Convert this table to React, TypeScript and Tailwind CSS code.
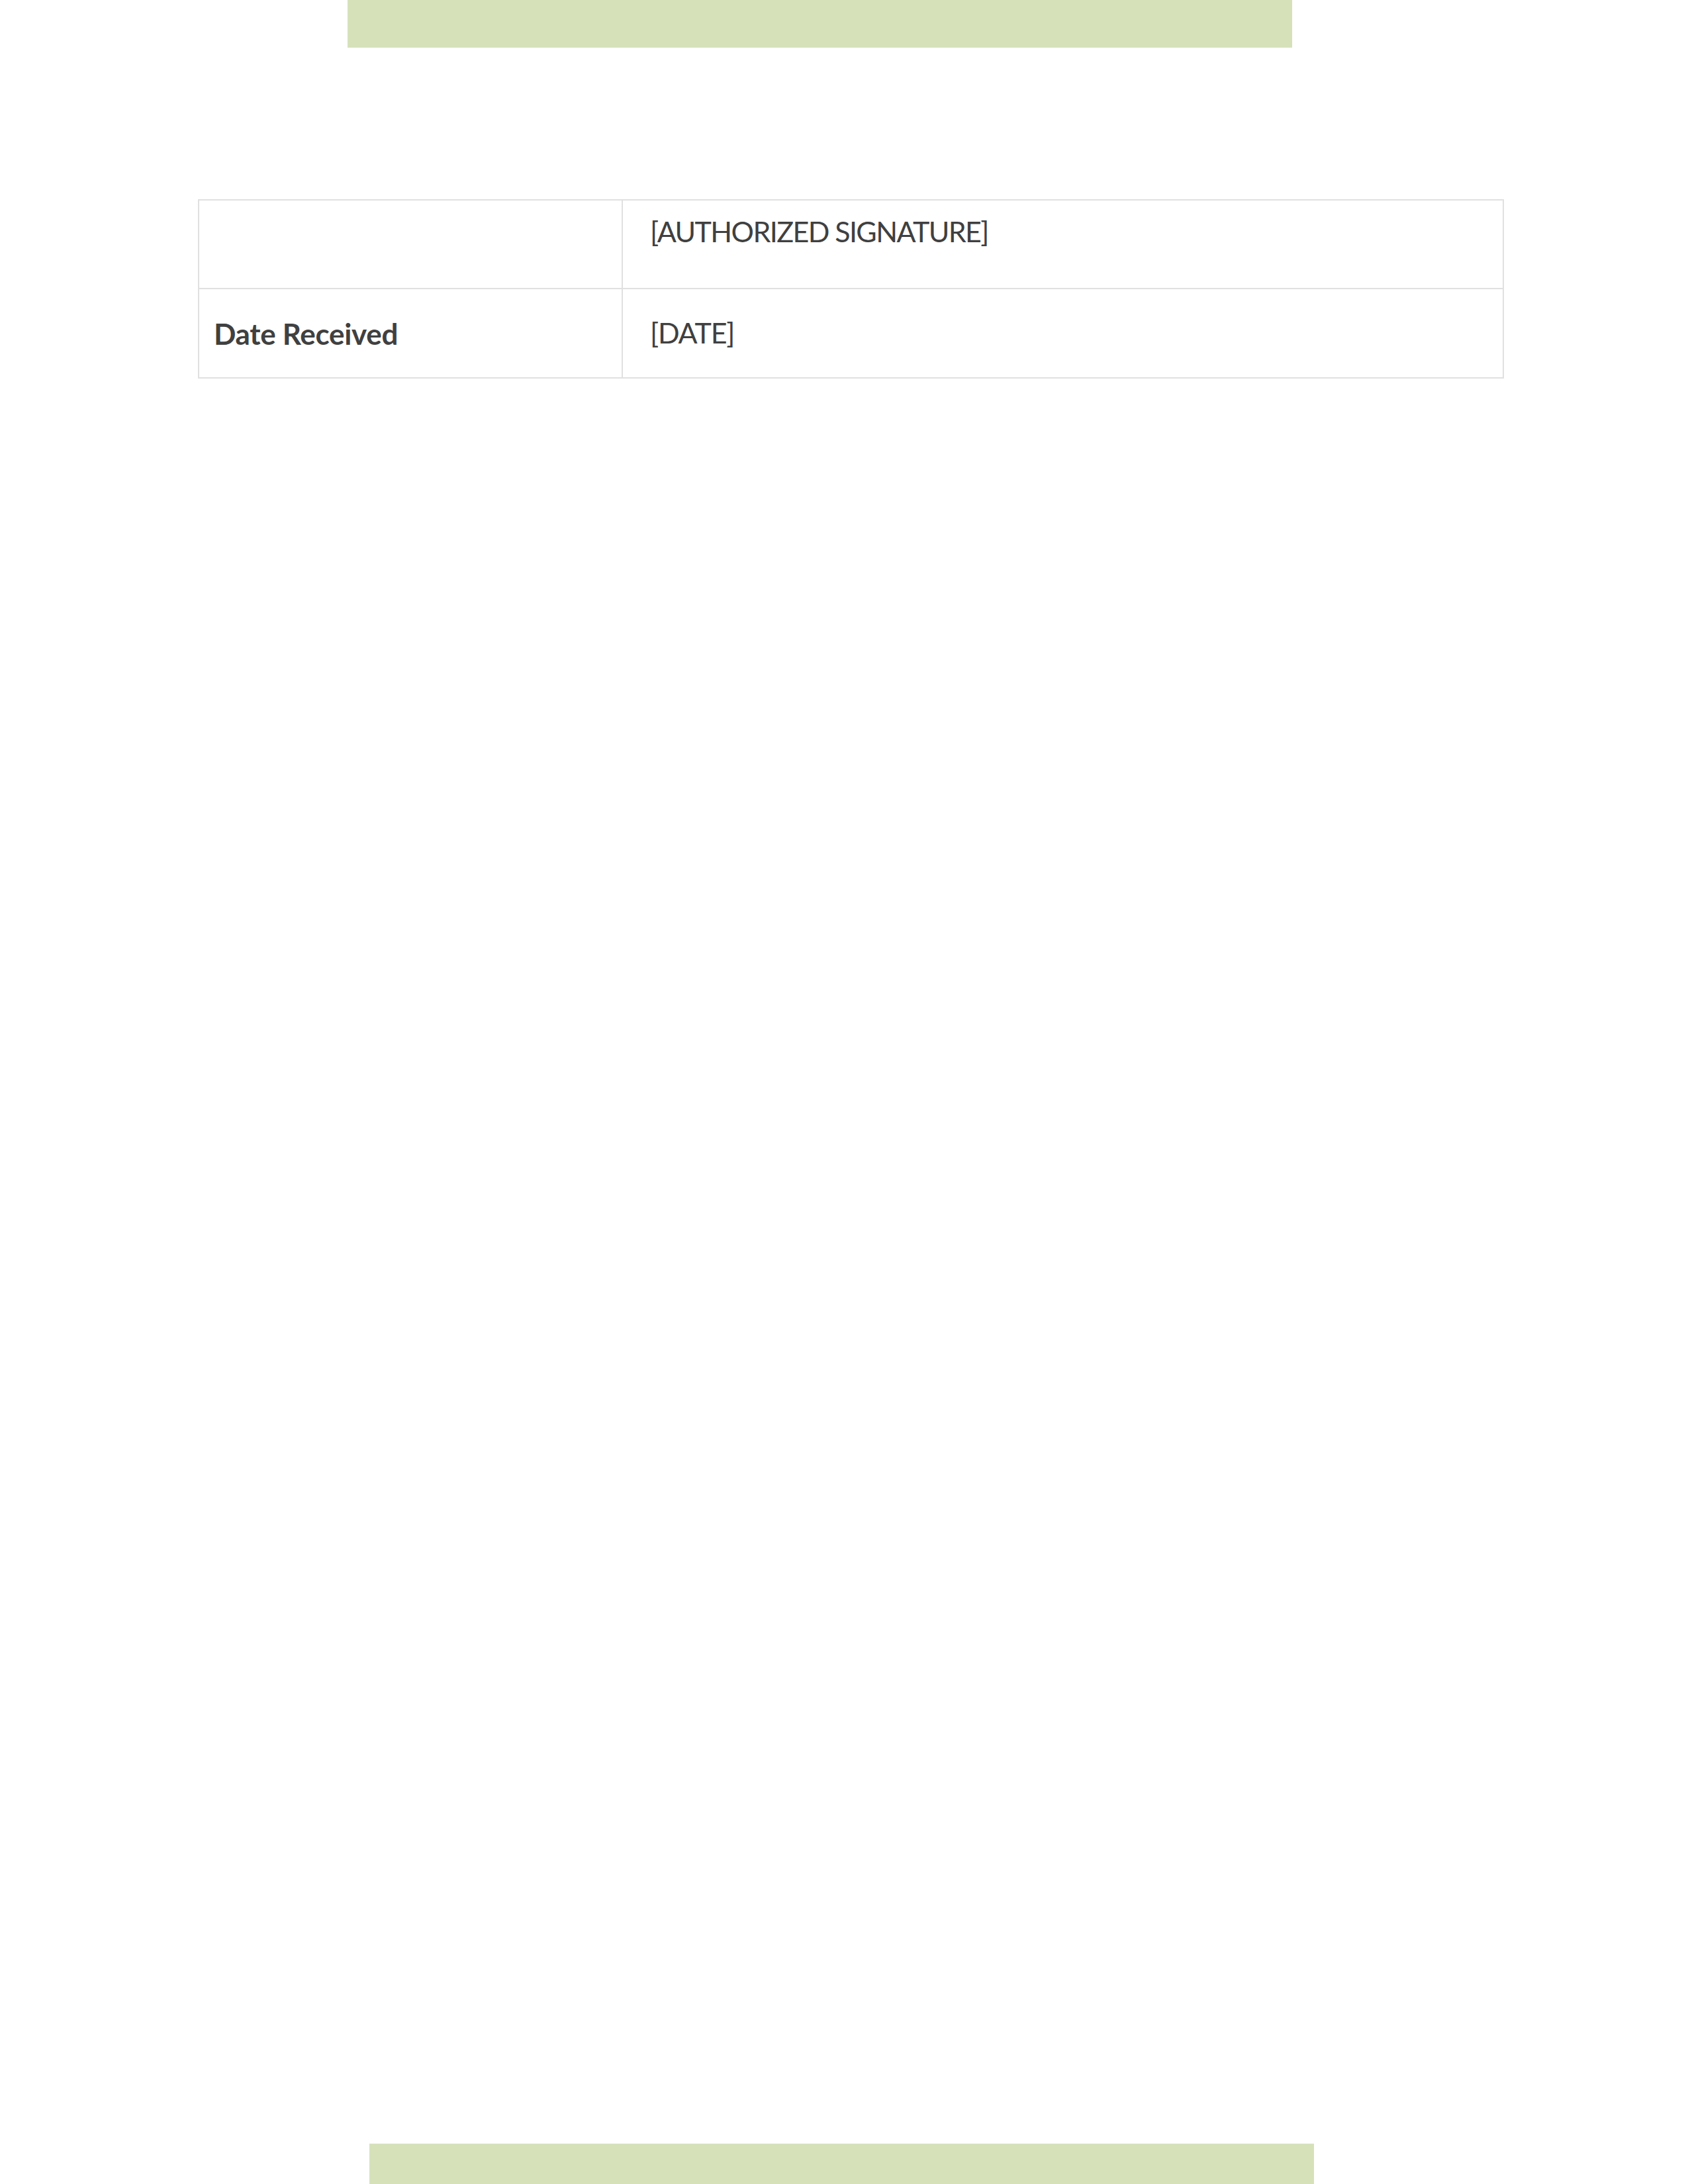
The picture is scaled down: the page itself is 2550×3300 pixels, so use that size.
export default function App() {
  return (
    <div className="w-[2550px] h-[3300px] bg-white flex flex-col text-[#404040]" style={{ fontFamily: "Lato, 'Open Sans', sans-serif" }}>
      <div className="ml-[525px] w-[1427px] h-[72px] bg-[#d6e1ba] shrink-0" />

      <div className="ml-[299px] mt-[229px] w-[1973px] border-2 border-[#e0e0e0] grid grid-cols-[640px_1fr]">
        <div className="h-[134px] border-r-2 border-b-2 border-[#e0e0e0]" />
        <div className="h-[134px] border-b-2 border-[#e0e0e0] pl-[41px] pt-[21px] text-[43px] leading-[52px] tracking-[-1.6px]">
          [AUTHORIZED SIGNATURE]
        </div>
        <div className="h-[133px] border-r-2 border-[#e0e0e0] pl-[22px] flex items-center font-bold text-[44px] tracking-[-0.3px]">
          Date Received
        </div>
        <div className="h-[133px] pl-[41px] flex items-center text-[43px] tracking-[-1.2px]">
          [DATE]
        </div>
      </div>

      <div className="flex-1" />
      <div className="ml-[558px] w-[1427px] h-[61px] bg-[#d6e1ba] shrink-0" />
    </div>
  );
}
